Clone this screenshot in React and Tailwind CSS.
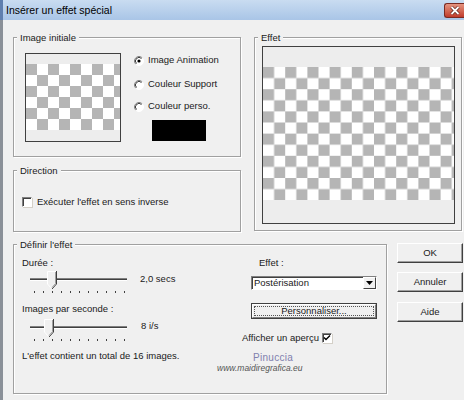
import React from "react";

function Checker({ w, h, size, id }) {
  const p = size * 2;
  return (
    <svg width={w} height={h} className="block">
      <defs>
        <pattern id={id} width={p} height={p} patternUnits="userSpaceOnUse">
          <rect width={p} height={p} fill="#ffffff" />
          <rect width={size} height={size} fill="#b5b5b5" />
          <rect x={size} y={size} width={size} height={size} fill="#b5b5b5" />
        </pattern>
      </defs>
      <rect width={w} height={h} fill={`url(#${id})`} />
    </svg>
  );
}

function Radio({ checked }) {
  return (
    <svg width="10" height="10" viewBox="0 0 10 10" className="block shrink-0">
      <circle cx="5" cy="5" r="4.5" fill="#ffffff" />
      <path d="M8.2 1.8 A4.5 4.5 0 0 0 1.8 8.2" stroke="#808080" strokeWidth="1" fill="none" />
      <path d="M7.5 2.5 A3.5 3.5 0 0 0 2.5 7.5" stroke="#404040" strokeWidth="1" fill="none" />
      <path d="M8.2 1.8 A4.5 4.5 0 0 1 1.8 8.2" stroke="#ffffff" strokeWidth="1" fill="none" />
      {checked && <circle cx="5" cy="5" r="1.6" fill="#000000" />}
    </svg>
  );
}

function Check({ checked }) {
  return (
    <div className="w-[10px] h-[10px] shrink-0 bg-white border-t border-l border-t-[#808080] border-l-[#808080] border-b border-r border-b-white border-r-white shadow-[inset_1px_1px_0_#404040,1px_1px_0_#d4d0c8] flex items-center justify-center">
      {checked && (
        <svg width="8" height="8" viewBox="0 0 8 8" className="block">
          <path d="M1 3.5 L3 5.5 L7 1.5" stroke="#000" strokeWidth="1.4" fill="none" />
        </svg>
      )}
    </div>
  );
}

function Slider({ thumb }) {
  const ticks = Array.from({ length: 11 }, (_, i) => 6 + i * 9);
  const x0 = thumb;
  const x1 = thumb + 10;
  const xc = thumb + 5;
  return (
    <svg width="102" height="24" className="block shrink-0">
      <rect x="2" y="8" width="97" height="1" fill="#808080" />
      <rect x="2" y="9" width="97" height="1" fill="#404040" />
      <rect x="2" y="10" width="97" height="1" fill="#ffffff" />
      <polygon points={`${x0},1 ${x1},1 ${x1},14 ${xc},19 ${x0},14`} fill="#f0f0f0" />
      <polyline points={`${xc},19 ${x0 + 0.5},14 ${x0 + 0.5},1.5 ${x1},1.5`} stroke="#ffffff" fill="none" />
      <polyline points={`${x1 - 0.5},1 ${x1 - 0.5},14 ${xc},19`} stroke="#404040" fill="none" />
      <polyline points={`${x1 - 1.5},2 ${x1 - 1.5},13.5 ${xc},17.5`} stroke="#a0a0a0" fill="none" />
      {ticks.map((t) => (
        <rect key={t} x={t} y="21" width="1" height="2" fill="#404040" />
      ))}
    </svg>
  );
}

function Group({ legend, className, children }) {
  return (
    <div className={`relative border border-[#a0a0a0] shadow-[inset_1px_1px_0_#fff,1px_1px_0_#fff] ${className}`}>
      <span className="absolute -top-[6px] left-[3px] px-[3px] bg-[#f0f0f0] leading-[11px]">{legend}</span>
      {children}
    </div>
  );
}

function Button({ label }) {
  return (
    <div className="w-[66px] h-[20px] bg-[#f0f0f0] border border-t-white border-l-white border-r-[#404040] border-b-[#404040] shadow-[inset_-1px_-1px_0_#a0a0a0] flex items-center justify-center leading-none">
      {label}
    </div>
  );
}

export default function App() {
  return (
    <div className="w-[464px] h-[400px] flex bg-[#f0f0f0] overflow-hidden text-[9.5px] text-[#1a1a1a] font-['Liberation_Sans',Arial,sans-serif]">
      <div className="w-[3px] h-full bg-[#8a9098] flex flex-col">
        <div className="h-[20px] bg-[#5f7fae]" />
      </div>
      <div className="flex-1 flex flex-col">
        <div className="h-[20px] bg-gradient-to-b from-[#c9dcf1] to-[#a9c5e7] flex items-center justify-between pl-[3px]">
          <span className="text-[10.5px] text-black leading-none">Insérer un effet spécial</span>
          <div className="w-[20px] h-[15px] rounded-l-[3px] border border-r-0 border-[#7a2a22] bg-gradient-to-b from-[#e4937f] to-[#c03a2b] flex items-center justify-center">
            <svg width="10" height="9" viewBox="0 0 10 9" className="block">
              <path d="M1.5 1 L8.5 8 M8.5 1 L1.5 8" stroke="#5a1a12" strokeWidth="3.2" />
              <path d="M1.5 1 L8.5 8 M8.5 1 L1.5 8" stroke="#ffffff" strokeWidth="1.8" />
            </svg>
          </div>
        </div>

        <div className="flex-1 flex flex-col pl-[10px] pt-[17px]">
          <div className="flex">
            <div className="flex flex-col gap-[13px]">
              <Group legend="Image initiale" className="w-[228px] h-[120px]">
                <div className="flex pl-[11px] pt-[15px]">
                  <div className="w-[96px] h-[89px] border border-[#404040] flex flex-col bg-[#ededed]">
                    <div className="h-[10px]" />
                    <Checker w={94} h={66} size={11} id="ck1" />
                  </div>
                  <div className="flex flex-col ml-[13px] pt-[1px]">
                    <div className="h-[13px] flex items-center gap-[4px]">
                      <Radio checked />
                      <span>Image Animation</span>
                    </div>
                    <div className="h-[13px] flex items-center gap-[4px] mt-[11px]">
                      <Radio />
                      <span>Couleur Support</span>
                    </div>
                    <div className="h-[13px] flex items-center gap-[4px] mt-[9px]">
                      <Radio />
                      <span>Couleur perso.</span>
                    </div>
                    <div className="w-[54px] h-[21px] bg-black ml-[18px] mt-[7px]" />
                  </div>
                </div>
              </Group>
              <Group legend="Direction" className="w-[228px] h-[62px]">
                <div className="flex items-center pl-[8px] pt-[26px] gap-[5px]">
                  <Check />
                  <span className="leading-[10px]">Exécuter l'effet en sens inverse</span>
                </div>
              </Group>
            </div>
            <Group legend="Effet" className="w-[208px] h-[194px] ml-[13px]">
              <div className="pl-[7px] pt-[8px]">
                <div className="w-[193px] h-[178px] border border-[#404040] flex flex-col bg-[#ededed]">
                  <div className="h-[20px]" />
                  <Checker w={191} h={133} size={11.1} id="ck2" />
                </div>
              </div>
            </Group>
          </div>

          <div className="flex mt-[12px]">
            <Group legend="Définir l'effet" className="w-[374px] h-[150px] flex">
              <div className="w-[228px] pl-[8px] pt-[12px] flex flex-col">
                <span className="leading-[11px]">Durée :</span>
                <div className="flex items-start mt-[2px]">
                  <div className="ml-[6px]">
                    <Slider thumb={19} />
                  </div>
                  <span className="ml-[10px] mt-[3px] leading-[11px]">2,0 secs</span>
                </div>
                <span className="leading-[11px] mt-[9px]">Images par seconde :</span>
                <div className="flex items-start mt-[4px]">
                  <div className="ml-[6px]">
                    <Slider thumb={16} />
                  </div>
                  <span className="ml-[11px] mt-[2px] leading-[11px]">8 i/s</span>
                </div>
                <span className="leading-[11px] mt-[8px]">L'effet contient un total de 16 images.</span>
              </div>
              <div className="flex-1 pt-[12px] flex flex-col">
                <span className="leading-[11px] ml-[17px]">Effet :</span>
                <div className="ml-[9px] mt-[8px] w-[126px] h-[14px] bg-white border-t border-l border-t-[#808080] border-l-[#808080] border-b border-r border-b-white border-r-white shadow-[inset_1px_1px_0_#404040] flex items-center justify-between">
                  <span className="pl-[2px] leading-none">Postérisation</span>
                  <div className="w-[13px] h-[12px] bg-[#f0f0f0] border border-t-white border-l-white border-r-[#404040] border-b-[#404040] flex items-center justify-center">
                    <svg width="7" height="4" viewBox="0 0 7 4" className="block">
                      <polygon points="0,0 7,0 3.5,4" fill="#000" />
                    </svg>
                  </div>
                </div>
                <div className="ml-[9px] mt-[13px] w-[126px] h-[16px] border border-[#404040] flex">
                  <div className="flex-1 bg-[#f0f0f0] border border-t-white border-l-white border-r-[#808080] border-b-[#808080] p-[1px] flex">
                    <div className="flex-1 border border-dotted border-[#555] flex items-center justify-center leading-none">
                      Personnaliser...
                    </div>
                  </div>
                </div>
                <div className="mt-[13px] h-[11px] flex items-center gap-[3px]">
                  <span className="leading-[11px]">Afficher un aperçu</span>
                  <Check checked />
                </div>
              </div>
              <span className="absolute left-[239px] top-[107px] text-[10px] leading-[11px] text-[#8080ae] tracking-[0.3px]">Pinuccia</span>
              <span className="absolute left-[203px] top-[119px] text-[8.5px] leading-[9px] italic text-[#555]">www.maidiregrafica.eu</span>
            </Group>
            <div className="flex flex-col ml-[10px] -mt-[1px]">
              <Button label="OK" />
              <div className="mt-[9px]">
                <Button label="Annuler" />
              </div>
              <div className="mt-[10px]">
                <Button label="Aide" />
              </div>
            </div>
          </div>
        </div>
      </div>
    </div>
  );
}
